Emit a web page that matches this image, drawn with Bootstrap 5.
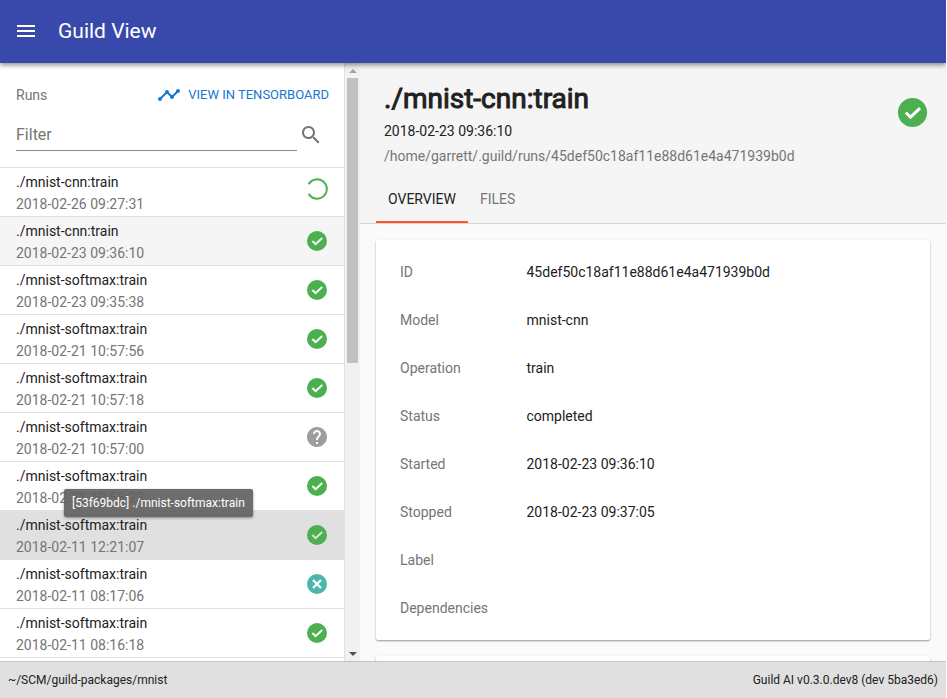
<!DOCTYPE html>
<html lang="en">
<head>
<meta charset="utf-8">
<meta name="viewport" content="width=device-width, initial-scale=1">
<title>Guild View</title>
<link href="https://cdn.jsdelivr.net/npm/bootstrap@5.3.0/dist/css/bootstrap.min.css" rel="stylesheet">
<style>
  body { font-family: Roboto, "Liberation Sans", sans-serif; font-size: 14px; line-height: 22px; color: #212121; background: #fafafa; }
  .app-shell { border-right: 1px solid #fff; }
  .topbar { height: 63px; padding: 0 16px 2px; gap: 18px; background: #3949ab; box-shadow: 0 2px 5px rgba(0,0,0,.45); z-index: 3; }
  .topbar-title { font-size: 21px; padding-top: 2px; }
  .icon24 { width: 24px; height: 24px; fill: currentColor; display: block; flex: none; }
  .icon35 { width: 35px; height: 35px; display: block; flex: none; }
  .fill-rest { min-height: 0; }
  .runs-side { width: 360px; }
  .runs-pane { background: #fff; border-right: 1px solid #e0e0e0; min-width: 0; }
  .muted { color: #757575; }
  .runs-head { padding: 20px 15px 0 16px; }
  .tb-link { color: #1976d2; font-size: 13px; line-height: 24px; }
  .filter-row { padding: 11px 19px 16px 16px; }
  .filter-box { border: 0; border-bottom: 1px solid #8a8a8a; border-radius: 0; padding: 5px 0 3px; font-size: 16px; line-height: 24px; background: none; }
  .filter-box::placeholder { color: #757575; }
  .run-item { height: 49px; border: 0; border-top: 1px solid #e0e0e0; padding: 1px 15px 0 16px; color: #212121; background: #fff; line-height: 22px; }
  .run-item.chosen { background: #f5f5f5; --tick: #f5f5f5; }
  .run-item.hovered { background: #e0e0e0; --tick: #e0e0e0; }
  .run-item .icon24 { margin-bottom: 2px; }
  .run-item .busy-icon { margin-bottom: 8px; }
  .run-tip { left: 64px; top: -22px; padding: 0 8px; height: 28px; line-height: 28px; font-size: 12px; color: #fff; background: rgba(97,97,97,.92); border-radius: 2px; box-shadow: 0 1px 3px rgba(0,0,0,.4); z-index: 2; }
  .scroll-track { width: 15px; background: #f1f1f1; flex: none; padding: 6px 0 5px; }
  .scroll-thumb { width: 11px; height: 285px; background: #c1c1c1; }
  .arrow-up { border: 4px solid transparent; border-top: 0; border-bottom: 4px solid #a3a3a3; margin-bottom: 5px; }
  .arrow-down { border: 4px solid transparent; border-bottom: 0; border-top: 4px solid #505050; }
  .detail-head { background: #f5f5f5; border-bottom: 1px solid #d6d6d6; padding: 16px 16px 0; }
  .detail-title { font-size: 28px; line-height: 40px; font-weight: 400; -webkit-text-stroke: 1px currentColor; }
  .detail-line { line-height: 25px; }
  .detail-tabs { padding-top: 7px; }
  .tab-btn { border: 0; background: none; padding: 1px 12px 0; height: 47px; color: #757575; border-bottom: 2px solid transparent; }
  .tab-btn.on { color: #212121; border-bottom-color: #ff5722; }
  .detail-body { padding: 16px; overflow: hidden; }
  .sheet { background: #fff; border-radius: 2px; box-shadow: 0 1px 2px rgba(0,0,0,.4); padding: 8px 24px; margin-bottom: 16px; }
  .facts th { width: 25%; font-weight: 400; color: #757575; }
  .facts th, .facts td { height: 48px; padding: 0; vertical-align: middle; }
  .statusbar { height: 37px; background: #e0e0e0; border-top: 1px solid #c4c4c4; font-size: 12px; padding: 0 8px; z-index: 3; }
</style>
<script src="https://cdn.jsdelivr.net/npm/bootstrap@5.3.0/dist/js/bootstrap.bundle.min.js"></script>
</head>
<body>
<svg class="d-none" aria-hidden="true">
  <symbol id="ok" viewBox="0 0 24 24"><circle cx="12" cy="12" r="10" fill="#4caf50"/><path d="M7.400 12l3.200 3.200L17.200 9" fill="none" stroke="var(--tick, #fff)" stroke-width="2"/></symbol>
  <symbol id="help" viewBox="0 0 24 24"><path fill="#9e9e9e" d="M12 2C6.480 2 2 6.480 2 12s4.480 10 10 10 10-4.480 10-10S17.520 2 12 2zm1 17h-2v-2h2v2zm2.070-7.750l-.9.920C13.450 12.900 13 13.500 13 15h-2v-.5c0-1.100.45-2.100 1.170-2.830l1.240-1.260c.37-.36.59-.86.59-1.410 0-1.100-.9-2-2-2s-2 .9-2 2H8c0-2.210 1.790-4 4-4s4 1.790 4 4c0 .88-.36 1.680-.93 2.250z"/></symbol>
  <symbol id="stop" viewBox="0 0 24 24"><circle cx="12" cy="12" r="10" fill="#4db6ac"/><path d="M8 8l8 8M16 8l-8 8" stroke="#fff" stroke-width="2.200"/></symbol>
  <symbol id="busy" viewBox="0 0 24 24"><path d="M3.600 7.300A9.700 9.700 0 1 1 3.600 16.700" fill="none" stroke="#4caf50" stroke-width="2"/></symbol>
</svg>
<div class="app-shell vh-100 d-flex flex-column overflow-hidden">
  <header class="topbar d-flex align-items-center flex-shrink-0 text-white position-relative">
    <button class="btn p-0 border-0 text-white" type="button" aria-label="Menu"><svg class="icon24" viewBox="2 0 24 24"><path d="M3 18h18v-2H3v2zm0-5h18v-2H3v2zm0-7v2h18V6H3z"/></svg></button>
    <h1 class="topbar-title fw-normal m-0">Guild View</h1>
  </header>
  <div class="d-flex flex-grow-1 fill-rest">
    <aside class="runs-side d-flex flex-shrink-0">
      <div class="runs-pane flex-grow-1 d-flex flex-column overflow-hidden">
        <div class="runs-head d-flex align-items-center justify-content-between">
          <span class="muted">Runs</span>
          <a class="tb-link d-flex align-items-center text-decoration-none" href="#"><svg class="icon24 me-2" viewBox="-1 0 24 24"><path d="M23 8c0 1.100-.9 2-2 2-.18 0-.35-.02-.51-.07l-3.560 3.550c.05.16.07.34.07.52 0 1.100-.9 2-2 2s-2-.9-2-2c0-.18.02-.36.07-.52l-2.550-2.550c-.16.05-.34.07-.52.07s-.36-.02-.52-.07l-4.550 4.560c.05.16.07.33.07.51 0 1.100-.9 2-2 2s-2-.9-2-2 .9-2 2-2c.18 0 .35.02.51.07l4.560-4.550C8.020 9.360 8 9.180 8 9c0-1.100.9-2 2-2s2 .9 2 2c0 .18-.02.36-.07.52l2.550 2.550c.16-.05.34-.07.52-.07s.36.02.52.07l3.550-3.560C19.020 8.350 19 8.180 19 8c0-1.100.9-2 2-2s2 .9 2 2z"/></svg>VIEW IN TENSORBOARD</a>
        </div>
        <div class="filter-row d-flex align-items-center muted">
          <input class="filter-box form-control shadow-none me-1" type="text" placeholder="Filter" aria-label="Filter">
          <svg class="icon24" viewBox="2 0 24 24"><path d="M15.500 14h-.79l-.28-.27C15.410 12.590 16 11.110 16 9.500 16 5.910 13.090 3 9.500 3S3 5.910 3 9.500 5.910 16 9.500 16c1.610 0 3.090-.59 4.230-1.570l.27.28v.79l5 4.990L20.490 19l-4.990-5zm-6 0C7.010 14 5 11.990 5 9.500S7.010 5 9.500 5 14 7.010 14 9.500 11.990 14 9.500 14z"/></svg>
        </div>
        <div class="list-group list-group-flush">
          <a href="#" class="run-item d-flex justify-content-between align-items-center text-decoration-none"><div>./mnist-cnn:train<br><span class="muted">2018-02-26 09:27:31</span></div><svg class="icon24 busy-icon"><use href="#busy"/></svg></a>
          <a href="#" class="run-item chosen d-flex justify-content-between align-items-center text-decoration-none"><div>./mnist-cnn:train<br><span class="muted">2018-02-23 09:36:10</span></div><svg class="icon24"><use href="#ok"/></svg></a>
          <a href="#" class="run-item d-flex justify-content-between align-items-center text-decoration-none"><div>./mnist-softmax:train<br><span class="muted">2018-02-23 09:35:38</span></div><svg class="icon24"><use href="#ok"/></svg></a>
          <a href="#" class="run-item d-flex justify-content-between align-items-center text-decoration-none"><div>./mnist-softmax:train<br><span class="muted">2018-02-21 10:57:56</span></div><svg class="icon24"><use href="#ok"/></svg></a>
          <a href="#" class="run-item d-flex justify-content-between align-items-center text-decoration-none"><div>./mnist-softmax:train<br><span class="muted">2018-02-21 10:57:18</span></div><svg class="icon24"><use href="#ok"/></svg></a>
          <a href="#" class="run-item d-flex justify-content-between align-items-center text-decoration-none"><div>./mnist-softmax:train<br><span class="muted">2018-02-21 10:57:00</span></div><svg class="icon24"><use href="#help"/></svg></a>
          <a href="#" class="run-item d-flex justify-content-between align-items-center text-decoration-none"><div>./mnist-softmax:train<br><span class="muted">2018-02-21 10:56:23</span></div><svg class="icon24"><use href="#ok"/></svg></a>
          <a href="#" class="run-item hovered position-relative d-flex justify-content-between align-items-center text-decoration-none"><div>./mnist-softmax:train<br><span class="muted">2018-02-11 12:21:07</span></div><svg class="icon24"><use href="#ok"/></svg><span class="run-tip position-absolute text-nowrap" role="tooltip">[53f69bdc] ./mnist-softmax:train</span></a>
          <a href="#" class="run-item d-flex justify-content-between align-items-center text-decoration-none"><div>./mnist-softmax:train<br><span class="muted">2018-02-11 08:17:06</span></div><svg class="icon24"><use href="#stop"/></svg></a>
          <a href="#" class="run-item d-flex justify-content-between align-items-center text-decoration-none"><div>./mnist-softmax:train<br><span class="muted">2018-02-11 08:16:18</span></div><svg class="icon24"><use href="#ok"/></svg></a>
          <div class="run-item"></div>
        </div>
      </div>
      <div class="scroll-track d-flex flex-column align-items-center" aria-hidden="true">
        <div class="arrow-up"></div><div class="scroll-thumb"></div><div class="arrow-down mt-auto"></div>
      </div>
    </aside>
    <main class="flex-grow-1 d-flex flex-column overflow-hidden">
      <div class="detail-head">
        <div class="d-flex justify-content-between align-items-start ps-2">
          <div>
            <h2 class="detail-title m-0">./mnist-cnn:train</h2>
            <div class="detail-line">2018-02-23 09:36:10</div>
            <div class="detail-line muted">/home/garrett/.guild/runs/45def50c18af11e88d61e4a471939b0d</div>
          </div>
          <svg class="icon35 mt-3"><use href="#ok"/></svg>
        </div>
        <div class="detail-tabs d-flex" role="tablist">
          <button class="tab-btn on" type="button" role="tab" aria-selected="true">OVERVIEW</button>
          <button class="tab-btn" type="button" role="tab" aria-selected="false">FILES</button>
        </div>
      </div>
      <div class="detail-body flex-grow-1 fill-rest">
        <section class="sheet">
          <table class="facts w-100">
            <tbody>
              <tr><th scope="row">ID</th><td>45def50c18af11e88d61e4a471939b0d</td></tr>
              <tr><th scope="row">Model</th><td>mnist-cnn</td></tr>
              <tr><th scope="row">Operation</th><td>train</td></tr>
              <tr><th scope="row">Status</th><td>completed</td></tr>
              <tr><th scope="row">Started</th><td>2018-02-23 09:36:10</td></tr>
              <tr><th scope="row">Stopped</th><td>2018-02-23 09:37:05</td></tr>
              <tr><th scope="row">Label</th><td></td></tr>
              <tr><th scope="row">Dependencies</th><td></td></tr>
            </tbody>
          </table>
        </section>
        <section class="sheet"></section>
      </div>
    </main>
  </div>
  <footer class="statusbar d-flex align-items-center justify-content-between flex-shrink-0 position-relative">
    <span>~/SCM/guild-packages/mnist</span><span>Guild AI v0.3.0.dev8 (dev 5ba3ed6)</span>
  </footer>
</div>
</body>
</html>
